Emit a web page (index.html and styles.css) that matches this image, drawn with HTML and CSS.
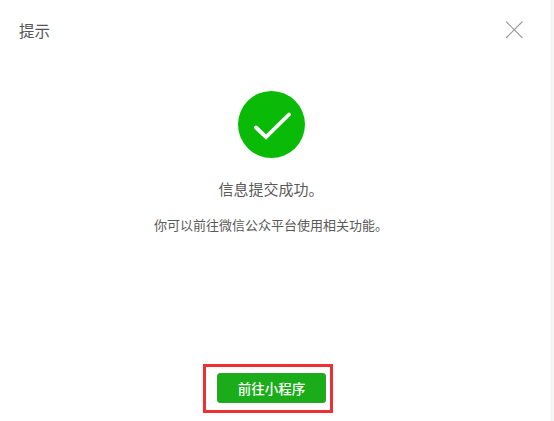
FILE: index.html
```html
<!DOCTYPE html>
<html lang="zh-CN">
<head>
<meta charset="utf-8">
<title>提示</title>
<link rel="stylesheet" href="styles.css">
</head>
<body>
<div class="dialog">
  <header class="dialog-head">
    <h1 class="dialog-title">提示</h1>
    <svg class="close-icon" viewBox="0 0 18 18" width="18" height="18" aria-hidden="true">
      <path d="M1 0.5L17.5 17M17.5 0.5L1 17" stroke="#9a9a9a" stroke-width="1.1" fill="none"/>
    </svg>
  </header>
  <main class="dialog-body">
    <svg class="success-icon" viewBox="0 0 67 67" width="67" height="67" aria-hidden="true">
      <circle cx="33.5" cy="33.5" r="33.5" fill="#09bb07"/>
      <path d="M18 36.5L28 46L51 23.5" stroke="#fff" stroke-width="3.8" stroke-linecap="round" stroke-linejoin="miter" fill="none"/>
    </svg>
    <p class="msg-main">信息提交成功。</p>
    <p class="msg-sub">你可以前往微信公众平台使用相关功能。</p>
  </main>
  <footer class="dialog-foot">
    <div class="highlight">
      <button class="primary-btn" type="button">前往小程序</button>
    </div>
  </footer>
</div>
</body>
</html>
```
FILE: styles.css
```css
html, body {
  margin: 0;
  padding: 0;
  height: 100%;
  background: #f6f6f6;
  overflow: hidden;
}
.dialog {
  width: 550px;
  height: 421px;
  background: #fff;
  display: flex;
  flex-direction: column;
  font-family: "Noto Sans CJK SC", "Liberation Sans", sans-serif;
  color: #353535;
}
.dialog-head {
  display: flex;
  align-items: center;
  justify-content: space-between;
  height: 22px;
  padding: 19px 27px 1px 19px;
}
.dialog-title {
  margin: 0;
  font-size: 15.5px;
  font-weight: 400;
  line-height: 22px;
  color: #555;
}
.close-icon {
  display: block;
}
.dialog-body {
  display: flex;
  flex-direction: column;
  align-items: center;
  padding-top: 49px;
  padding-right: 8px;
  flex: 1;
}
.success-icon {
  display: block;
}
.msg-main {
  margin: 19px 0 0;
  font-size: 15px;
  line-height: 24px;
  color: #5a5a5a;
}
.msg-sub {
  margin: 15px 0 0;
  font-size: 13px;
  line-height: 18px;
  color: #5a5a5a;
}
.dialog-foot {
  display: flex;
  padding-left: 203px;
  padding-bottom: 8px;
}
.highlight {
  box-sizing: border-box;
  width: 130px;
  height: 49px;
  border: 3px solid #ee2f33;
  padding: 6px 4px 0 11px;
}
.primary-btn {
  display: block;
  width: 109px;
  height: 30px;
  padding: 0;
  border: 1px solid #2aa52a;
  border-radius: 3px;
  background: #1aad19;
  color: #fff;
  font-family: inherit;
  font-size: 13.5px;
  font-weight: 500;
  line-height: 28px;
}
```
